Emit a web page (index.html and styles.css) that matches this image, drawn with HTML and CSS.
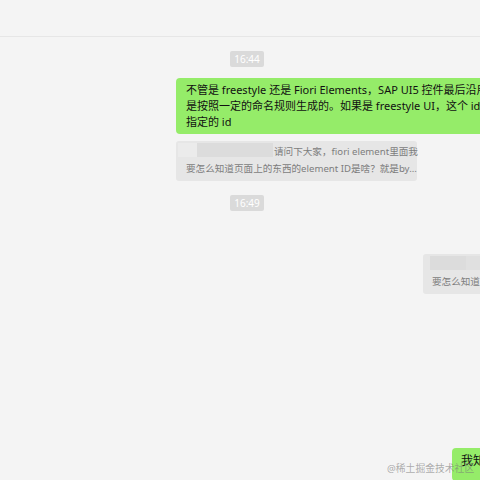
FILE: index.html
```html
<!DOCTYPE html>
<html lang="zh">
<head>
<meta charset="utf-8">
<link rel="stylesheet" href="styles.css">
</head>
<body>
<div class="page">
  <header class="topbar"></header>
  <main class="chat">
    <div class="time t1">16:44</div>
    <div class="bubble green first">不管是 freestyle 还是 Fiori Elements，SAP UI5 控件最后沿用<br>是按照一定的命名规则生成的。如果是 freestyle UI，这个 id 是开发人员<br>指定的 id</div>
    <div class="quote left-quote"><span class="redact"></span>请问下大家，fiori element里面我<br>要怎么知道页面上的东西的element ID是啥？就是by...</div>
    <div class="time t2">16:49</div>
    <div class="quote right-quote"><span class="redact wide"></span><br>要怎么知道页面上的东西</div>
    <div class="bubble green last">我知道了</div>
  </main>
  <div class="watermark">@稀土掘金技术社区</div>
</div>
</body>
</html>
```
FILE: styles.css
```css
html, body {
  margin: 0;
  padding: 0;
}
body {
  width: 480px;
  height: 480px;
  overflow: hidden;
  background: #f4f4f4;
  font-family: "Noto Sans", "Noto Sans CJK SC", sans-serif;
}
.page {
  position: relative;
  width: 480px;
  height: 480px;
  overflow: hidden;
}
.topbar {
  height: 36px;
  border-bottom: 1px solid #e6e6e6;
}
.chat {
  display: flex;
  flex-direction: column;
  align-items: flex-start;
  padding-left: 176px;
}
.time {
  margin-left: 54px;
  width: 34px;
  height: 16px;
  line-height: 16px;
  background: #dadada;
  color: #ffffff;
  font-size: 10px;
  text-align: center;
  border-radius: 2px;
}
.t1 { margin-top: 14px; }
.t2 { margin-top: 14px; }
.bubble {
  white-space: nowrap;
  border-radius: 4px;
  color: #111;
}
.green {
  background: #95ec69;
}
.first {
  margin-top: 11px;
  padding: 4px 10px;
  font-size: 11px;
  line-height: 16px;
}
.quote {
  white-space: nowrap;
  background: #e6e6e6;
  color: #7d7d7d;
  border-radius: 3px;
  font-size: 9.6px;
  line-height: 17px;
  padding: 2px 10px 4px 10px;
}
.left-quote {
  margin-top: 7px;
  width: 221px;
}
.redact {
  display: inline-block;
  vertical-align: top;
  margin-left: -8px;
  margin-right: 1px;
  width: 95px;
  height: 14px;
  background: linear-gradient(to right, #ebebeb 0 19px, #dcdcdc 19px);
}
.right-quote {
  margin-top: 43px;
  margin-left: 247px;
  width: 120px;
  padding-left: 9px;
}
.redact.wide {
  margin-left: -2px;
  width: 120px;
  background: linear-gradient(to right, #dcdcdc 0 36px, #e0e0e0 36px);
}
.last {
  margin-top: 154px;
  margin-left: 276px;
  padding: 5px 9px 12px 9px;
  font-size: 12px;
  line-height: 16px;
}
.watermark {
  position: absolute;
  left: 387px;
  top: 462px;
  font-size: 9.8px;
  line-height: 14px;
  color: rgba(120, 120, 120, 0.6);
  white-space: nowrap;
}
```
